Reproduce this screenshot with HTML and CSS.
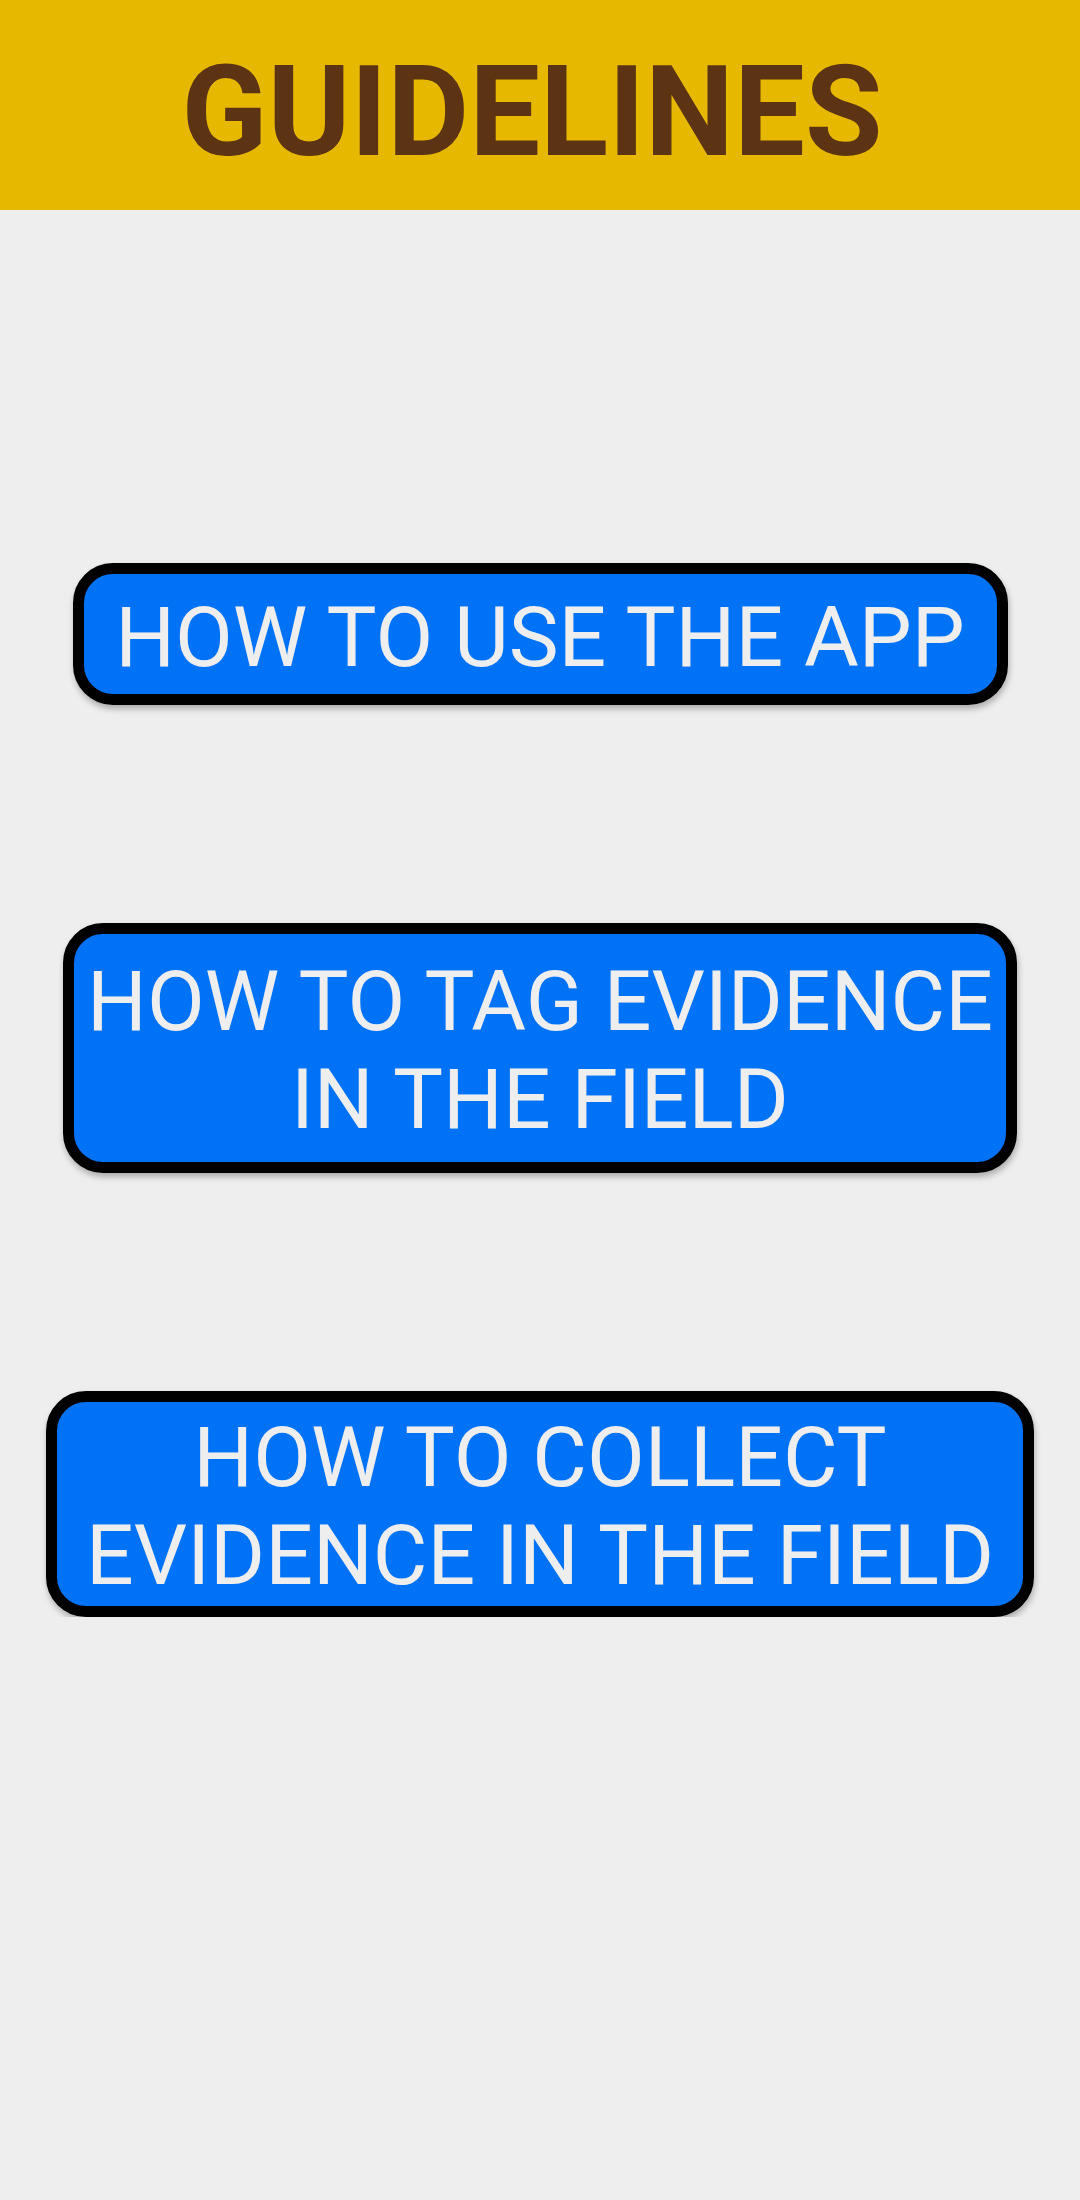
FILE: index.html
```html
<!DOCTYPE html>
<html>
<head>
<meta charset="utf-8">
<link rel="stylesheet" href="styles.css">
</head>
<body>
<header class="topbar">
  <h1 class="title">GUIDELINES</h1>
</header>
<main class="menu">
  <button class="guide-btn btn-app">HOW TO USE THE APP</button>
  <button class="guide-btn btn-tag">HOW TO TAG EVIDENCE<br>IN THE FIELD</button>
  <button class="guide-btn btn-collect">HOW TO COLLECT<br>EVIDENCE IN THE FIELD</button>
</main>
</body>
</html>
```

FILE: styles.css
```css
html, body {
  margin: 0;
  padding: 0;
  background: #eeeeee;
  font-family: Roboto, "Liberation Sans", sans-serif;
}

.topbar {
  height: 210px;
  box-sizing: border-box;
  background: #e6b800;
  padding-top: 38px;
  display: flex;
  justify-content: center;
}

.title {
  margin: 0;
  font-family: Roboto, "Liberation Sans", sans-serif;
  font-weight: 700;
  font-size: 126px;
  line-height: 148px;
  color: #5c3313;
  padding-right: 16px;
}

.menu {
  display: flex;
  flex-direction: column;
  align-items: center;
  padding-top: 353px;
  gap: 218px;
}

.guide-btn {
  box-sizing: border-box;
  background: #0072f5;
  color: #eeeeee;
  border: 11px solid #000000;
  border-radius: 40px;
  font-family: Roboto, "Liberation Sans", sans-serif;
  font-weight: 400;
  font-size: 84px;
  line-height: 98px;
  text-align: center;
  padding-left: 0;
  padding-right: 0;
  margin: 0;
  box-shadow: 1px 4px 6px rgba(0, 0, 0, 0.28);
  white-space: nowrap;
}

.btn-app {
  width: 935px;
  height: 142px;
  padding-top: 15px;
  padding-bottom: 7px;
}

.btn-tag {
  width: 954px;
  height: 250px;
  padding-top: 19px;
  padding-bottom: 13px;
}

.btn-collect {
  width: 988px;
  height: 226px;
  padding-top: 7px;
  padding-bottom: 1px;
}
```
